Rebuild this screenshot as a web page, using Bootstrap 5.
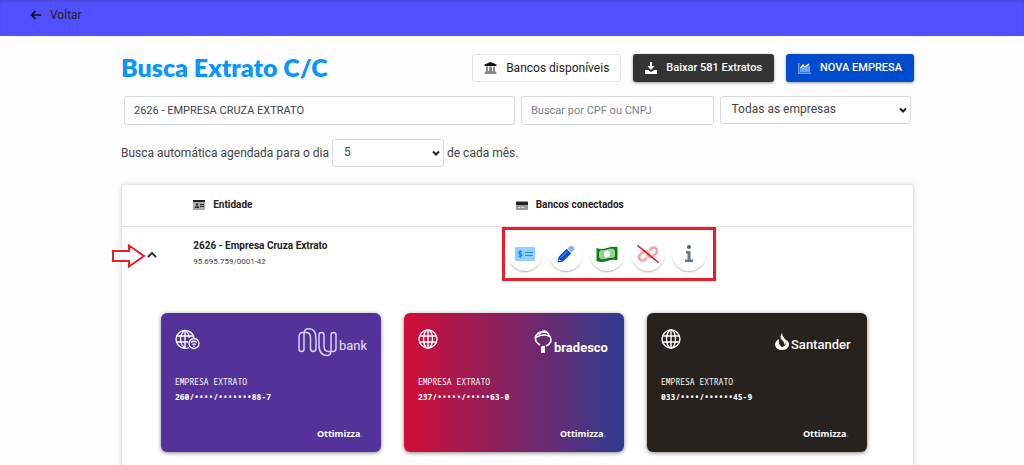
<!DOCTYPE html>
<html lang="pt-BR">
<head>
<meta charset="utf-8">
<meta name="viewport" content="width=device-width, initial-scale=1">
<title>Busca Extrato C/C</title>
<link href="https://cdn.jsdelivr.net/npm/bootstrap@5.3.0/dist/css/bootstrap.min.css" rel="stylesheet">
<style>
body{font-family:Roboto,"Noto Sans",sans-serif;font-size:12px;line-height:18px;color:#444;background:#fdfdfd}
.topbar{height:36px;background:#5050ff;padding:6px 30px;box-shadow:inset 0 2px 2px #4848e0}
.topbar a{color:#222;gap:9px}
.page{padding:18px 110px 0 121px}
h1{font-family:Lato,"Open Sans",sans-serif;font-size:25px;line-height:26px;color:#0a95ff;font-weight:800}
.btn{font-size:11px;font-weight:500;line-height:18px;height:28px;padding:4px 11px;border-radius:3px;gap:9px;white-space:nowrap}
.btn-banks{background:#fff;border-color:#e2e2e6;color:#222;font-weight:400;font-size:12px}
.btn-down{background:#333;color:#fff;box-shadow:0 1px 3px #0006}
.btn-new{background:#004bce;color:#fff;box-shadow:0 1px 3px #0006}
.filters{display:grid;grid-template-columns:390fr 192fr 191fr;gap:6px;padding:0 3px;margin-top:14px}
.form-control,.pick{font-size:12px;line-height:18px;height:29px;padding:4px 9px;border:1px solid #d9d9e0;border-radius:3px;color:#444;background-color:#fff}
.form-control{font-size:11px}
.form-control::placeholder{color:#7b828a}
.pick{height:28px;padding:0 24px 2px 11px;appearance:none;background-repeat:no-repeat;background-position:right 2px center;background-image:url("data:image/svg+xml,%3Csvg xmlns='http://www.w3.org/2000/svg' width='10' height='8'%3E%3Cpath d='M2 2.500 5 5.500 8 2.500' fill='none' stroke='%23222' stroke-width='2'/%3E%3C/svg%3E")}
.schedule{margin-top:14px;gap:3px}
.schedule .pick{width:112px}
.panel{margin-top:17px;background:#fff;border:1px solid #e3e3e6;border-bottom:0;border-radius:4px 4px 0 0;box-shadow:0 0 5px #0002}
.grid{width:100%;table-layout:fixed;font-size:11px;line-height:16px;color:#222}
.grid thead th{height:41px;padding:0;font-weight:700;font-size:10px;border-bottom:1px solid #e3e3e6}
.grid thead th:last-child{padding-left:14px}
.grid td{padding:0;vertical-align:top}
.c-toggle{width:9%}.c-ent{width:39%}
.company{font-size:10px;font-weight:700;padding-top:11px}
.doc{font-size:8px;color:#444}
.toggle{width:16px;height:16px;border:0;background:none;margin:20px 0 0 22px}
.pointer{left:-10px;top:17px}
.actions{width:214px;height:54px;border:3px solid #ec1c2b;padding:0 3px;gap:7px}
.round-btn{width:34px;height:34px;border:0;border-radius:50%;background:#fff;box-shadow:0 2px 2px -1px #0005}
.banks{padding:32px 46px 40px 39px;gap:23px}
.bank{flex:1 1 0;height:139px;border-radius:6px;color:#fff;padding:15px 14px 12px;box-shadow:0 1px 4px #0007}
.nu{background:#54329a}
.bra{background:linear-gradient(90deg,#d20d37,#2f3b92)}
.san{background:#27221d}
.holder{font-family:"Noto Sans Mono","DejaVu Sans Mono",monospace;font-size:8px;line-height:15px;margin-top:16px}
.logo{font-family:Roboto,sans-serif}
.maker{font-family:"Open Sans",sans-serif;font-weight:700;font-size:9px;line-height:12px;padding-right:4px}
.maker i{color:#2a9df4;font-style:normal}
.san .maker i{color:#2a62f4}
svg{display:block;flex:none}
</style>
</head>
<body>
<div class="vh-100 overflow-hidden d-flex flex-column">
<header class="topbar flex-shrink-0"><a href="#" class="d-inline-flex align-items-center text-decoration-none"><svg width="11" height="10" viewBox="0 0 11 10" fill="none" stroke="#111" stroke-width="1.700"><path d="M5.500 1 1.500 5l4 4M1.500 5H11"/></svg>Voltar</a></header>
<main class="page flex-grow-1 d-flex flex-column">
<div class="d-flex justify-content-between align-items-start">
<h1 class="m-0">Busca Extrato C/C</h1>
<div class="d-flex gap-2">
<button type="button" class="btn btn-banks d-flex align-items-center me-1"><svg width="13" height="12" viewBox="0 0 13 12"><path d="M6.500 0 12.500 2.500V4H.5V2.500z" fill="#111"/><path d="M2 4.500h2V9h1V4.500h3V9h1V4.500h2V9l1.500 2v1h-12v-1L2 9z" fill="#888"/></svg>Bancos disponíveis</button>
<button type="button" class="btn btn-down d-flex align-items-center me-1"><svg width="12" height="12" viewBox="0 0 12 12" fill="#fff"><path d="M5 0h2v4h2.500L6 8 2.500 4H5zM0 8h3l3 2 3-2h3v4H0z"/></svg>Baixar 581 Extratos</button>
<button type="button" class="btn btn-new d-flex align-items-center"><svg width="13" height="11" viewBox="0 0 13 11"><path d="M2 9V5l3-2 2 1 5-2v7z" fill="#6ba0ea"/><path d="M.7 0v10.300H13" fill="none" stroke="#6ba0ea" stroke-width="1.400"/><path d="m2.500 5 2.500-3 2 2 4-3" fill="none" stroke="#fff" stroke-width="1.300"/></svg>NOVA EMPRESA</button>
</div>
</div>
<form class="filters">
<input class="form-control" aria-label="Empresa" value="2626 - EMPRESA CRUZA EXTRATO">
<input class="form-control" aria-label="CPF ou CNPJ" placeholder="Buscar por CPF ou CNPJ">
<select class="pick" aria-label="Filtro de empresas"><option>Todas as empresas</option></select>
</form>
<div class="schedule d-flex align-items-center"><label for="day">Busca automática agendada para o dia</label><select id="day" class="pick"><option>5</option></select><span>de cada mês.</span></div>
<section class="panel flex-grow-1">
<table class="grid">
<colgroup><col class="c-toggle"><col class="c-ent"><col></colgroup>
<thead><tr><th></th>
<th><div class="d-flex align-items-center gap-2"><svg width="12" height="10" viewBox="0 0 12 10"><path d="M0 0h12v10H0z" fill="#aaa"/><path d="M0 0h12v2H0zM3 3.500h2v2H3zM2 6.500h4V8H2zM7 4h4v1H7zM7 6h4v1H7z" fill="#222"/></svg>Entidade</div></th>
<th><div class="d-flex align-items-center gap-2"><svg width="12" height="9" viewBox="0 0 12 9"><rect width="12" height="9" rx="1" fill="#999"/><path d="M0 1h12v3H0z" fill="#222"/><path d="M2 6.500h2M5 6.500h3" stroke="#ddd"/></svg>Bancos conectados</div></th></tr></thead>
<tbody><tr>
<td><div class="position-relative"><svg class="pointer position-absolute" width="34" height="24" viewBox="0 0 34 24"><path d="M1 7h16V1.500L32 12 17 22.500V17H1z" fill="#fff" stroke="#ec1c2b" stroke-width="2"/></svg><button type="button" class="toggle p-0" aria-label="Recolher"><svg width="16" height="16" fill="none" stroke="#222" stroke-width="1.800"><path d="m4 10 4-4 4 4"/></svg></button></div></td>
<td><div class="company">2626 - Empresa Cruza Extrato</div><div class="doc">95.695.759/0001-42</div></td>
<td><div class="actions d-flex align-items-center">
<button type="button" class="round-btn d-flex align-items-center justify-content-center p-0" aria-label="Conta"><svg width="20" height="14" viewBox="0 0 20 14"><rect width="20" height="14" rx="1" fill="#94d0ff"/><path d="M10 5.500h8M10 8.500h8M7 4.500H4.500q-1.500 1 0 2.300H6q1.500 1.200 0 2.300H3.300M5.200 3v8" stroke="#148cf5" stroke-width="1.200" fill="none"/></svg></button>
<button type="button" class="round-btn d-flex align-items-center justify-content-center p-0" aria-label="Editar"><svg width="18" height="18" viewBox="0 0 18 18"><path d="M10.500 3.500 13 1q1.500-1 3.300.7t.7 3.300L14.500 7.500z" fill="#91b2ed"/><path d="m9.500 3.700 4.800 4.800L6 16.500l-5.500 1L1.500 12z" fill="#0850d0"/><path d="m4 12.500 6-6" stroke="#80a8ef" fill="none"/><path d="m2.200 14 1.700 1.700-1.900.4z" fill="#fff"/></svg></button>
<button type="button" class="round-btn d-flex align-items-center justify-content-center p-0" aria-label="Dinheiro"><svg width="22" height="16" viewBox="0 0 22 16"><path d="M.5 2q5 2 10.500 0T21.500 1v13q-5-1-10.500 1T.5 15z" fill="#08800c"/><path d="M5 4q3 .5 6-.5t6-1l2 2v6l-2 1.500q-3-.5-6 .5t-6 .7L3 11.500V6z" fill="#9bcf9d"/><ellipse cx="11" cy="8" rx="3" ry="3.500" fill="#fff"/></svg></button>
<button type="button" class="round-btn d-flex align-items-center justify-content-center p-0" aria-label="Desconectar"><svg width="22" height="18" viewBox="0 0 22 18" fill="none"><g stroke="#f6a6aa" stroke-width="2.600"><path d="M9.500 12.500 8 14.500a3.500 3.500 0 0 1-5-5L6 7a3.600 3.600 0 0 1 5.500.5q1 2-.5 3.500"/><path d="M12.500 5.500 14 3.500a3.500 3.500 0 0 1 5 5L16 11a3.600 3.600 0 0 1-5.500-.5q-1-2 .5-3.500"/></g><path d="M.5.5 21.500 17.500" stroke="#e5182b" stroke-width="1.600"/></svg></button>
<button type="button" class="round-btn d-flex align-items-center justify-content-center p-0" aria-label="Informações"><svg width="8" height="17" viewBox="0 0 8 17" fill="#66788a"><circle cx="4" cy="2" r="2" fill="#4c5f73"/><path d="M1 6h4.500v8.500H8V17H0v-2.500h2.500v-6H1z"/></svg></button>
</div></td>
</tr>
<tr><td colspan="3"><div class="banks d-flex">
<article class="bank nu d-flex flex-column"><div class="d-flex justify-content-between"><svg width="25" height="22" viewBox="0 0 25 22" fill="none" stroke="#fff" stroke-width="1.300"><path d="M14 19.500A9 9 0 1 1 19 10M1 8h17.500M1 14h12M10 2C4 7 4 15 10 20M10 2q4 3 4.300 8M10 2v18"/><circle cx="19" cy="15.500" r="5"/><path d="M16 14.500q3-2.500 6 0M17.300 16.500q1.700-1.400 3.400 0M19 17.500v1.500"/></svg>
<svg width="69" height="30" viewBox="0 0 69 30" fill="none" stroke="#d9d0ec" stroke-width="1.500"><path d="M1 21V9q0-4.500 4-4.500h3q4.500 0 4.500 5v11q0 3 2.700 3T18 20.500V11Q18 .8 11 .8 6 .8 6 6v15q0 2.500-2.500 2.500T1 21"/><path d="M21 7q0-2.500 2.500-2.500T26 7v11q0 5.500 4.500 5.500H35q3 0 3-3V7q0-2.500-2.500-2.500T33 7v15q0 5.500-3.500 5.500Q21 27.500 21 17z"/><text class="logo" x="41" y="22" font-size="13" fill="#e8e1f5" stroke="none">bank</text></svg></div>
<div class="holder">EMPRESA EXTRATO<br><b>260/••••/•••••••88-7</b></div><div class="maker text-end mt-auto">Ottimizza<i>.</i></div></article>
<article class="bank bra d-flex flex-column"><div class="d-flex justify-content-between"><svg width="20" height="22" viewBox="0 0 20 22" fill="none" stroke="#fff" stroke-width="1.400"><circle cx="10" cy="11" r="9"/><ellipse cx="10" cy="11" rx="4.500" ry="9"/><path d="M2 8h16M2 14h16M10 2v18"/></svg>
<svg width="76" height="30" viewBox="0 0 76 30"><path d="M7 25v-6q2-2 4-1v7z" fill="#fff"/><path d="M6 17Q0 13 2 9.500 9 5 16 8.500q3 6.500-4 9.500M1 10Q4 2 12 4.500M5 6.500Q11-1 15.500 8" fill="none" stroke="#fff" stroke-width="1.600"/><text class="logo" x="20" y="24" font-size="13" font-weight="700" fill="#fff">bradesco</text></svg></div>
<div class="holder">EMPRESA EXTRATO<br><b>237/•••••/•••••63-0</b></div><div class="maker text-end mt-auto">Ottimizza<i>.</i></div></article>
<article class="bank san d-flex flex-column"><div class="d-flex justify-content-between"><svg width="20" height="22" viewBox="0 0 20 22" fill="none" stroke="#fff" stroke-width="1.400"><circle cx="10" cy="11" r="9"/><ellipse cx="10" cy="11" rx="4.500" ry="9"/><path d="M2 8h16M2 14h16M10 2v18"/></svg>
<svg width="78" height="30" viewBox="0 0 78 30"><path d="M7 5q-3 4 0 7t2 5q4-3 1-6T7 5M4 11q-4 2-4 6 1 5 7 5t7-5q0-4-3-5 1 6-4 7-4-2-3-8" fill="#fff"/><text class="logo" x="16" y="21" font-size="13" font-weight="500" fill="#fff">Santander</text></svg></div>
<div class="holder">EMPRESA EXTRATO<br><b>033/••••/••••••45-9</b></div><div class="maker text-end mt-auto">Ottimizza<i>.</i></div></article>
</div></td></tr></tbody></table>
</section>
</main>
</div>
<script src="https://cdn.jsdelivr.net/npm/bootstrap@5.3.0/dist/js/bootstrap.bundle.min.js"></script>
</body>
</html>
